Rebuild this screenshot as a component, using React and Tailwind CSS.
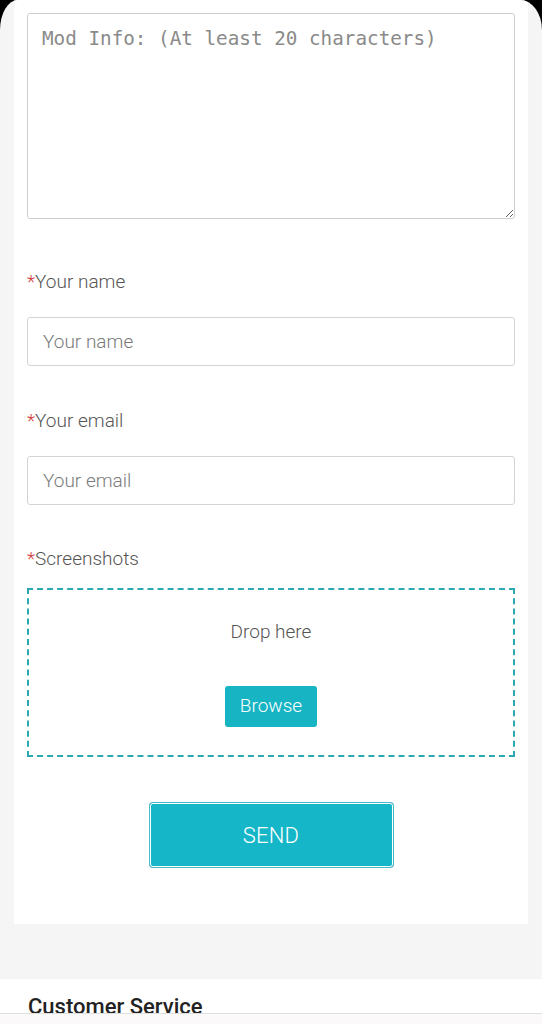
import React from 'react';

const Label = ({ children, className }) => (
  <div className={`text-[19px] leading-[28px] font-light text-[#555] ${className}`}>
    <span className="text-[#d13b3b]">*</span>
    {children}
  </div>
);

const App = () => {
  return (
    <div className="bg-black min-h-[1024px] w-[542px] overflow-hidden" style={{ fontFamily: 'Roboto, "Noto Sans", sans-serif' }}>
      <div className="bg-[#f5f5f5] rounded-tl-[18px_30px] rounded-tr-[22px_30px] overflow-hidden h-[1024px] flex flex-col">
        <div className="mx-[14px] bg-white px-[13px] pt-[13px] pb-[57px]">
          <textarea
            className="block w-full h-[206px] border border-[#cfcfcf] rounded-[3px] px-[14px] pt-[13px] text-[19.3px] leading-[24px] text-[#444] placeholder:text-[#8a8a8a] outline-none"
            style={{ fontFamily: '"DejaVu Sans Mono", "Liberation Mono", monospace' }}
            placeholder="Mod Info: (At least 20 characters)"
          />

          <Label className="mt-[49px]">Your name</Label>
          <input
            type="text"
            placeholder="Your name"
            className="block w-full mt-[21px] h-[49px] border border-[#d4d4d4] rounded-[3px] px-[15px] text-[19px] font-light text-[#444] placeholder:text-[#7a7a7a] outline-none"
          />

          <Label className="mt-[41px]">Your email</Label>
          <input
            type="email"
            placeholder="Your email"
            className="block w-full mt-[21px] h-[49px] border border-[#d4d4d4] rounded-[3px] px-[15px] text-[19px] font-light text-[#444] placeholder:text-[#7a7a7a] outline-none"
          />

          <Label className="mt-[40px]">Screenshots</Label>
          <div className="mt-[15px] h-[169px] border-2 border-dashed border-[#2aa9b3] flex flex-col items-center">
            <div className="mt-[28px] text-[19px] leading-[28px] font-light text-[#555]">Drop here</div>
            <button className="mt-[40px] h-[41px] w-[92px] bg-[#17b4c4] rounded-[3px] text-white text-[19px] font-light">
              Browse
            </button>
          </div>

          <div className="flex justify-center mt-[46px]">
            <button className="w-[243px] h-[64px] bg-[#14b6c7] border border-white ring-1 ring-[#47b9c5] rounded-[3px] text-white text-[22px] font-light tracking-[0.2px]">
              SEND
            </button>
          </div>
        </div>

        <div className="h-[55px]" />

        <div className="bg-white h-[34px] overflow-hidden px-[28px] pt-[14px]">
          <div className="text-[22px] leading-[28px] font-medium text-[#222]">Customer Service</div>
        </div>
        <div className="flex-1 border-t border-[#dedede] bg-[#fcf9fb]" />
      </div>
    </div>
  );
};

export default App;
